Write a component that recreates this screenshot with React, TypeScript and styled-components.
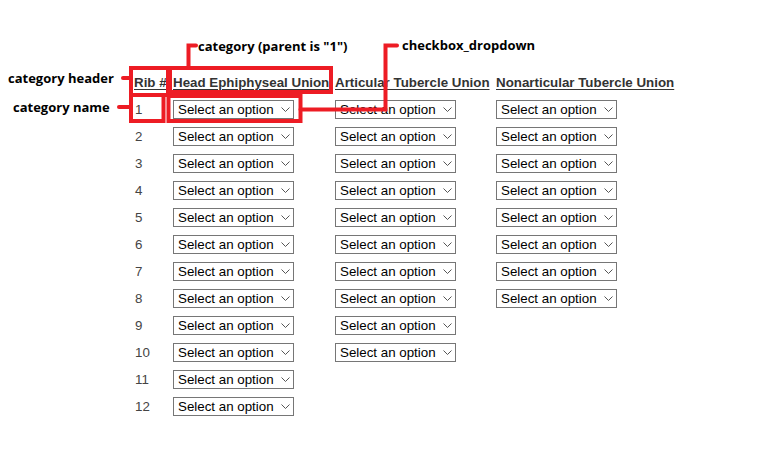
import React from 'react';
import styled, { createGlobalStyle } from 'styled-components';

const GlobalStyle = createGlobalStyle`
  html, body {
    margin: 0;
    padding: 0;
    background: #ffffff;
  }
  body {
    font-family: "Liberation Sans", Arial, sans-serif;
  }
`;

const Page = styled.div`
  position: relative;
  width: 758px;
  height: 462px;
  overflow: hidden;
  box-sizing: border-box;
  padding: 69px 0 0 134px;
`;

const RibGrid = styled.div`
  display: grid;
  grid-template-columns: 39px 162px 161px max-content;
  grid-auto-rows: 27px;
  align-items: center;
`;

const HeaderCell = styled.div`
  font-size: 13.33px;
  font-weight: 700;
  color: #333333;
  text-decoration: underline;
  text-underline-offset: 2px;
  white-space: nowrap;
`;

const NumberCell = styled.div`
  font-size: 13.33px;
  color: #444444;
  padding-left: 1px;
`;

const Empty = styled.div``;

const SelectWrap = styled.div`
  position: relative;
  width: 121px;
  height: 19px;
`;

const Dropdown = styled.select`
  appearance: none;
  -webkit-appearance: none;
  display: block;
  width: 121px;
  height: 19px;
  box-sizing: border-box;
  font-family: "Liberation Sans", Arial, sans-serif;
  font-size: 13.33px;
  color: #000000;
  background: #ffffff;
  border: 1px solid #767676;
  border-radius: 0;
  padding: 0 0 0 4px;
  margin: 0;
`;

const Chevron = styled.svg`
  position: absolute;
  right: 4px;
  top: 7px;
  pointer-events: none;
`;

const Overlay = styled.svg`
  position: absolute;
  left: 0;
  top: 0;
  pointer-events: none;
`;

const Label = styled.span<{ $x: number; $y: number }>`
  position: absolute;
  left: ${({ $x }) => $x}px;
  top: ${({ $y }) => $y}px;
  font-family: "Open Sans", "DejaVu Sans", sans-serif;
  font-weight: 700;
  font-size: 13px;
  line-height: 16px;
  color: #000000;
  white-space: nowrap;
`;

const headers = ['Rib #', 'Head Ephiphyseal Union', 'Articular Tubercle Union', 'Nonarticular Tubercle Union'];
// how many ribs each category column offers a dropdown for
const counts = [12, 10, 8];

const RED = '#ed1c24';

const Choice = () => (
  <SelectWrap>
    <Dropdown defaultValue="">
      <option value="">Select an option</option>
      <option value="unfused">Unfused</option>
      <option value="partial">Partially fused</option>
      <option value="fused">Fused</option>
    </Dropdown>
    <Chevron width={9} height={5} viewBox="0 0 9 5">
      <path d="M0.5 0.5 L4.5 4.5 L8.5 0.5" fill="none" stroke="#555" strokeWidth={1} />
    </Chevron>
  </SelectWrap>
);

const App = () => {
  const rows = Array.from({ length: 12 }, (_, i) => i + 1);
  return (
    <>
      <GlobalStyle />
      <Page>
        <RibGrid>
          {headers.map((h) => (
            <HeaderCell key={h}>{h}</HeaderCell>
          ))}
          {rows.map((n) => (
            <React.Fragment key={n}>
              <NumberCell>{n}</NumberCell>
              {counts.map((c, ci) => (n <= c ? <div key={ci}><Choice /></div> : <Empty key={ci} />))}
            </React.Fragment>
          ))}
        </RibGrid>

        <Overlay width={758} height={462} viewBox="0 0 758 462">
          <g fill="none" stroke={RED} strokeWidth={4}>
            <rect x={131} y={68} width={37} height={27} />
            <rect x={131} y={95} width={32.5} height={26} />
            <rect x={170} y={68} width={161} height={24} />
            <rect x={168.5} y={96} width={132} height={25} />
            <path d="M188.5 68 V45.5 H196" strokeLinecap="round" />
            <path d="M300.5 109.5 H385.5 V45.5 H397" strokeLinecap="round" />
            <path d="M123 78 H131" strokeLinecap="round" />
            <path d="M119 107 H131" strokeLinecap="round" />
          </g>
        </Overlay>
        <Label $x={8} $y={70}>category header</Label>
        <Label $x={13} $y={99}>category name</Label>
        <Label $x={198} $y={38}>category (parent is "1")</Label>
        <Label $x={402} $y={37}>checkbox_dropdown</Label>
      </Page>
    </>
  );
};

export default App;
